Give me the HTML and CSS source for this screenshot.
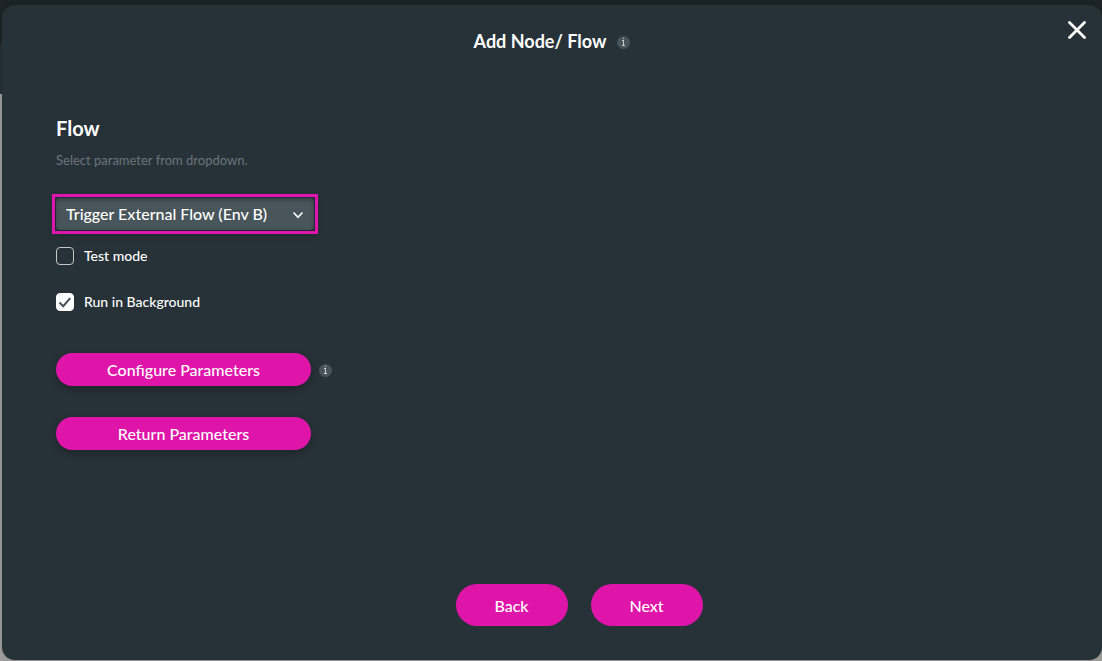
FILE: index.html
```html
<!DOCTYPE html>
<html lang="en">
<head>
<meta charset="utf-8">
<meta name="viewport" content="width=device-width, initial-scale=1">
<title>Add Node/ Flow</title>
<link rel="stylesheet" href="styles.css">
</head>
<body>
<main class="dialog" role="dialog" aria-labelledby="dialog-title">
  <header class="dialog-header">
    <h1 class="dialog-title" id="dialog-title">Add Node/ Flow</h1>
    <span class="info" role="img" aria-label="Information">
      <svg viewBox="0 0 13 13"><circle cx="6.5" cy="6.5" r="6.5" fill="#485459"/><path d="M6 2h1v1H6zM5 4h2v5h1v1H5V9h1V5H5z" fill="#c9cfd1"/></svg>
    </span>
    <button class="close" type="button" aria-label="Close">
      <svg viewBox="0 0 18 18"><path d="M1.5 1.5l15 15M16.5 1.5l-15 15" stroke="#fff" stroke-width="2.8" stroke-linecap="round"/></svg>
    </button>
  </header>
  <form class="dialog-form">
    <label class="field-title" for="flow">Flow</label>
    <p class="hint">Select parameter from dropdown.</p>
    <div class="select-box">
      <select class="select" id="flow"><option>Trigger External Flow (Env B)</option></select>
      <svg class="chevron" viewBox="0 0 10 7"><path d="M1 1l4 4.3L9 1" fill="none" stroke="#fff" stroke-width="1.7" stroke-linecap="round"/></svg>
    </div>
    <label class="check"><input class="check-input" type="checkbox">Test mode</label>
    <label class="check"><input class="check-input" type="checkbox" checked>Run in Background</label>
    <div class="action">
      <button class="button button-wide" type="button">Configure Parameters</button>
      <span class="info" role="img" aria-label="Information">
        <svg viewBox="0 0 13 13"><circle cx="6.5" cy="6.5" r="6.5" fill="#485459"/><path d="M6 2h1v1H6zM5 4h2v5h1v1H5V9h1V5H5z" fill="#c9cfd1"/></svg>
      </span>
    </div>
    <div class="action">
      <button class="button button-wide" type="button">Return Parameters</button>
    </div>
  </form>
  <footer class="dialog-footer">
    <button class="button button-nav" type="button">Back</button>
    <button class="button button-nav" type="button">Next</button>
  </footer>
</main>
</body>
</html>
```
FILE: styles.css
```css
* {
  box-sizing: border-box;
}

body {
  display: flex;
  min-height: 100vh;
  margin: 0;
  padding: 5px 0 1px 2px;
  background: linear-gradient(#1d2528 0 43px, #263035 43px 94px, #a3a2a0 94px);
  color: #fff;
  font-family: Lato, "Liberation Sans", sans-serif;
}

.dialog {
  position: relative;
  display: flex;
  flex: 1;
  flex-direction: column;
  border-radius: 13px;
  background: #273238;
  box-shadow: 0 0 8px rgba(0, 0, 0, 0.2);
}

.dialog-header {
  display: flex;
  align-items: center;
  justify-content: center;
  gap: 11px;
  padding-top: 24px;
}

.dialog-title {
  margin: 0;
  font-size: 18px;
  font-weight: 700;
  line-height: 24px;
}

.info {
  width: 13px;
  height: 13px;
  margin-top: 3px;
}

.info svg,
.close svg {
  display: block;
  width: 100%;
}

.close {
  position: absolute;
  top: 16px;
  right: 16px;
  width: 18px;
  padding: 0;
  border: 0;
  background: none;
  cursor: pointer;
}

.dialog-form {
  display: flex;
  flex-direction: column;
  align-items: flex-start;
  padding: 63px 54px 32px;
}

.field-title {
  font-size: 20px;
  font-weight: 700;
  line-height: 24px;
}

.hint {
  margin: 11px 0 29px;
  color: #6a757a;
  font-size: 13px;
  line-height: 18px;
}

.select-box {
  position: relative;
  width: 258px;
  max-width: 100%;
  margin-bottom: 17px;
  outline: 3px solid #e015ae;
  outline-offset: 1px;
  box-shadow: 0 4px 8px 2px rgba(0, 0, 0, 0.25);
}

.select {
  display: block;
  width: 100%;
  height: 32px;
  padding: 0 32px 2px 10px;
  border: 0;
  border-radius: 4px;
  appearance: none;
  background: #48555a;
  box-shadow: inset 0 2px 5px rgba(0, 0, 0, 0.25);
  color: #fff;
  font: 500 16px Lato, "Liberation Sans", sans-serif;
}

.chevron {
  position: absolute;
  top: 14px;
  right: 11px;
  width: 10px;
  pointer-events: none;
}

.check {
  display: flex;
  align-items: center;
  gap: 10px;
  height: 18px;
  margin-bottom: 28px;
  font-size: 14px;
  font-weight: 500;
  line-height: 18px;
}

.check-input {
  width: 18px;
  height: 18px;
  margin: 0;
  border: 1px solid #c4c8ca;
  border-radius: 4px;
  appearance: none;
}

.check-input:checked {
  border-color: #fff;
  background: #fff url("data:image/svg+xml,%3Csvg xmlns='http://www.w3.org/2000/svg' viewBox='0 0 16 16'%3E%3Cpath d='M2.5 8.5l3.7 3.7 7-8' fill='none' stroke='%23465258' stroke-width='2'/%3E%3C/svg%3E") center / 16px;
}

.action {
  display: flex;
  align-items: center;
  gap: 8px;
  margin: 14px 0 17px;
}

.action .info {
  margin-top: 2px;
}

.action + .action {
  margin-bottom: 0;
}

.button {
  padding: 1px 0 0;
  border: 0;
  border-radius: 21px;
  background: #df15aa;
  color: #fff;
  font: 500 16px/20px Lato, "Liberation Sans", sans-serif;
  cursor: pointer;
}

.button-wide {
  width: 255px;
  height: 33px;
  box-shadow: 0 3px 8px rgba(0, 0, 0, 0.3);
}

.button-nav {
  width: 112px;
  height: 42px;
}

.dialog-footer {
  display: flex;
  justify-content: center;
  gap: 23px;
  margin-top: auto;
  padding: 0 0 34px 54px;
}
```
